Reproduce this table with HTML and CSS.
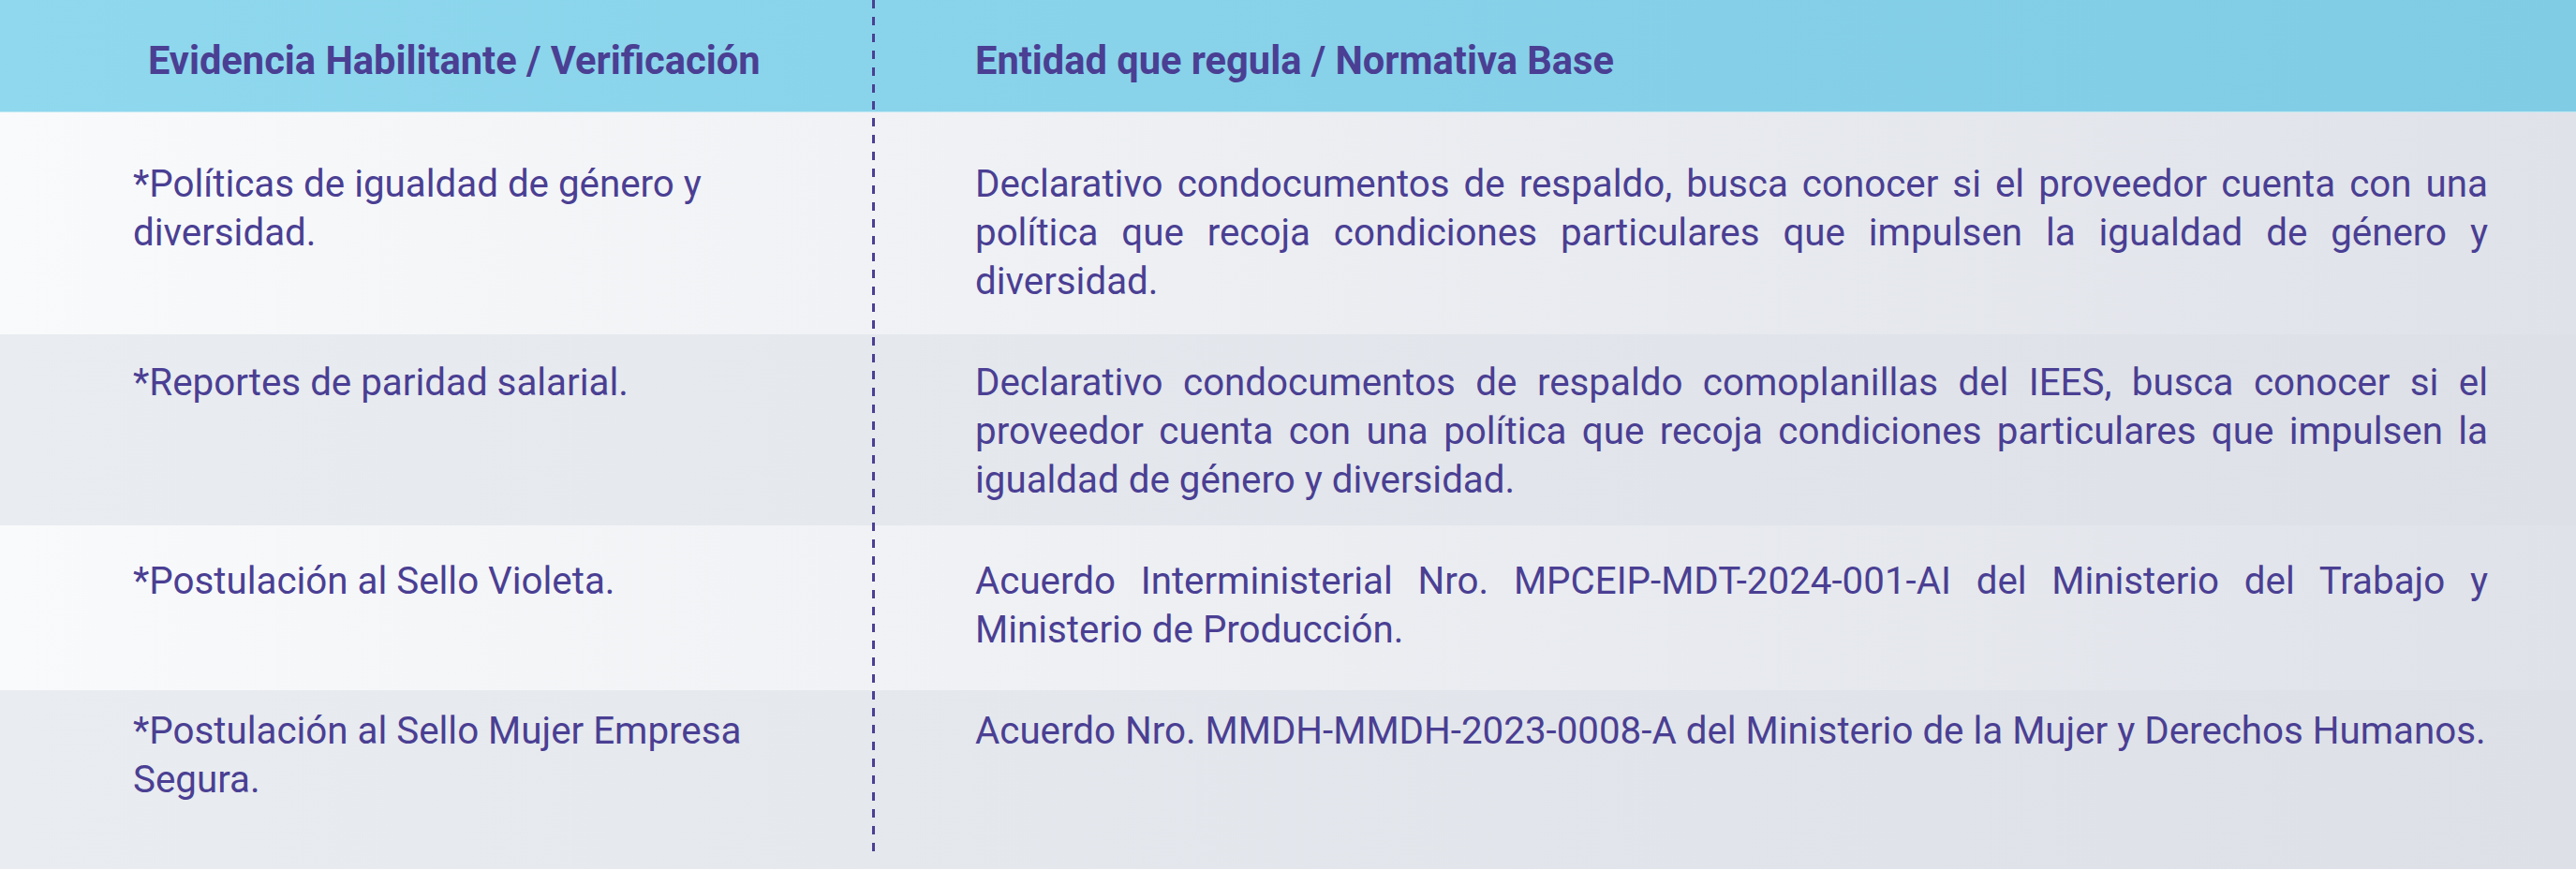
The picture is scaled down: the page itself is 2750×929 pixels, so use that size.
FILE: index.html
```html
<!DOCTYPE html>
<html lang="es">
<head>
<meta charset="utf-8">
<title>Evidencia Habilitante</title>
<link rel="stylesheet" href="styles.css">
</head>
<body>
<div class="table">
  <div class="row head">
    <div class="cell left">Evidencia Habilitante / Verificación</div>
    <div class="cell right">Entidad que regula / Normativa Base</div>
  </div>
  <div class="row odd r1">
    <div class="cell left">*Políticas de igualdad de género y diversidad.</div>
    <div class="cell right">Declarativo condocumentos de respaldo, busca conocer si el proveedor cuenta con una política que recoja condiciones particulares que impulsen la igualdad de género y diversidad.</div>
  </div>
  <div class="row even r2">
    <div class="cell left">*Reportes de paridad salarial.</div>
    <div class="cell right">Declarativo condocumentos de respaldo comoplanillas del IEES, busca conocer si el proveedor cuenta con una política que recoja condiciones particulares que impulsen la igualdad de género y diversidad.</div>
  </div>
  <div class="row odd r3">
    <div class="cell left">*Postulación al Sello Violeta.</div>
    <div class="cell right">Acuerdo Interministerial Nro. MPCEIP-MDT-2024-001-AI del Ministerio del Trabajo y Ministerio de Producción.</div>
  </div>
  <div class="row even r4">
    <div class="cell left">*Postulación al Sello Mujer Empresa Segura.</div>
    <div class="cell right">Acuerdo Nro. MMDH-MMDH-2023-0008-A del Ministerio de la Mujer y Derechos Humanos.</div>
  </div>
</div>
</body>
</html>
```
FILE: styles.css
```css
html, body {
  margin: 0;
  padding: 0;
  background: #ffffff;
}

body {
  font-family: Roboto, "Liberation Sans", sans-serif;
  color: #4a3f93;
}

.table {
  position: relative;
  width: 2750px;
}

.table::after {
  content: "";
  position: absolute;
  left: 931px;
  top: 0;
  width: 3px;
  height: 909px;
  background: repeating-linear-gradient(to bottom, #4a3f93 0, #4a3f93 9px, transparent 9px, transparent 18px);
}

.row {
  display: grid;
  grid-template-columns: 931px 1fr;
  box-sizing: border-box;
}

.cell {
  box-sizing: border-box;
  font-size: 40.3px;
  line-height: 52px;
}

.cell.left {
  padding-left: 142px;
  padding-right: 120px;
}

.cell.right {
  padding-left: 110px;
  padding-right: 94px;
  text-align: justify;
}

.head {
  height: 120px;
  background: linear-gradient(to right, #8fd8ee, #80cce5);
  border-bottom: 1px solid #bfe8f4;
}

.head .cell {
  font-size: 41.6px;
  font-weight: 700;
  padding-top: 39px;
  white-space: nowrap;
}

.head .cell.left {
  padding-left: 158px;
  padding-right: 40px;
}

.odd {
  background: linear-gradient(to right, #f9fafb, #dfe2e9);
}

.even {
  background: linear-gradient(to right, #e9ecf0, #dde0e7);
}

.r1 { height: 237px; }
.r1 .cell { padding-top: 51px; }

.r2 { height: 204px; }
.r2 .cell { padding-top: 26px; }

.r3 { height: 176px; }
.r3 .cell { padding-top: 34px; }

.r4 { height: 191px; }
.r4 .cell { padding-top: 18px; }
```
